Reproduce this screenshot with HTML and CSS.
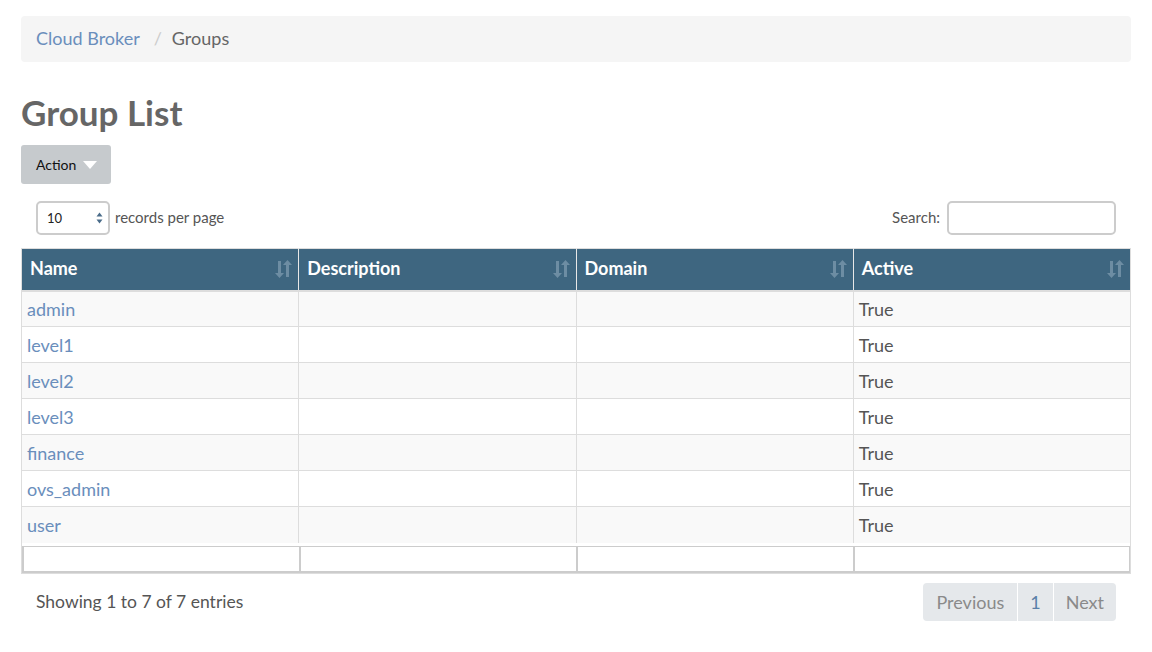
FILE: index.html
```html
<!DOCTYPE html>
<html>
<head>
<meta charset="utf-8">
<link rel="stylesheet" href="styles.css">
</head>
<body>
<div class="page">
  <nav class="crumbs">
    <a class="crumb-link" href="#">Cloud Broker</a>
    <span class="crumb-sep">/</span>
    <span class="crumb-current">Groups</span>
  </nav>
  <h1 class="title">Group List</h1>
  <button class="action-btn">Action <span class="caret"></span></button>
  <div class="controls">
    <div class="length">
      <div class="select-box">
        <span>10</span>
        <svg class="spinner" width="7" height="12" viewBox="0 0 7 12"><path d="M3.5 0.5 L6.5 4.5 H0.5 Z" fill="#4a6c8a"/><path d="M3.5 11.5 L6.5 7.5 H0.5 Z" fill="#4a6c8a"/></svg>
      </div>
      <span class="length-label">records per page</span>
    </div>
    <div class="search">
      <span class="search-label">Search:</span>
      <div class="search-input"></div>
    </div>
  </div>
  <table class="grid">
    <thead>
      <tr>
        <th><span>Name</span><svg class="sort" width="17" height="18" viewBox="0 0 17 18"><path d="M3 1h3v12h3l-4.5 5L0 13h3z" fill="#6d8da3"/><path d="M11 17V5H8l4.5-5L17 5h-3v12z" fill="#6d8da3"/></svg></th>
        <th><span>Description</span><svg class="sort" width="17" height="18" viewBox="0 0 17 18"><path d="M3 1h3v12h3l-4.5 5L0 13h3z" fill="#6d8da3"/><path d="M11 17V5H8l4.5-5L17 5h-3v12z" fill="#6d8da3"/></svg></th>
        <th><span>Domain</span><svg class="sort" width="17" height="18" viewBox="0 0 17 18"><path d="M3 1h3v12h3l-4.5 5L0 13h3z" fill="#6d8da3"/><path d="M11 17V5H8l4.5-5L17 5h-3v12z" fill="#6d8da3"/></svg></th>
        <th><span>Active</span><svg class="sort" width="17" height="18" viewBox="0 0 17 18"><path d="M3 1h3v12h3l-4.5 5L0 13h3z" fill="#6d8da3"/><path d="M11 17V5H8l4.5-5L17 5h-3v12z" fill="#6d8da3"/></svg></th>
      </tr>
    </thead>
    <tbody>
      <tr><td><a href="#">admin</a></td><td></td><td></td><td>True</td></tr>
      <tr><td><a href="#">level1</a></td><td></td><td></td><td>True</td></tr>
      <tr><td><a href="#">level2</a></td><td></td><td></td><td>True</td></tr>
      <tr><td><a href="#">level3</a></td><td></td><td></td><td>True</td></tr>
      <tr><td><a href="#">finance</a></td><td></td><td></td><td>True</td></tr>
      <tr><td><a href="#">ovs_admin</a></td><td></td><td></td><td>True</td></tr>
      <tr><td><a href="#">user</a></td><td></td><td></td><td>True</td></tr>
    </tbody>
    <tfoot>
      <tr>
        <td><div class="filter-cell"></div></td>
        <td><div class="filter-cell"></div></td>
        <td><div class="filter-cell"></div></td>
        <td><div class="filter-cell filter-last"></div></td>
      </tr>
    </tfoot>
  </table>
  <div class="footer">
    <div class="info">Showing 1 to 7 of 7 entries</div>
    <div class="pager">
      <span class="pg pg-off">Previous</span>
      <span class="pg pg-num">1</span>
      <span class="pg pg-off pg-next">Next</span>
    </div>
  </div>
</div>
</body>
</html>
```
FILE: styles.css
```css
* { box-sizing: border-box; }
html, body { margin: 0; padding: 0; background: #fff; }
body { font-family: Lato, "Open Sans", "Liberation Sans", sans-serif; color: #555; }
.page { padding: 16px 21px 0 21px; }

.crumbs {
  background: #f5f5f5;
  border-radius: 4px;
  height: 46px;
  display: flex;
  align-items: center;
  padding: 0 15px 3px 15px;
  font-size: 18px;
}
.crumb-link { color: #6a8ebc; text-decoration: none; }
.crumb-sep { color: #ccc; margin: 0 10px 0 14px; }
.crumb-current { color: #666; }

.title {
  margin: 30px 0 0 0;
  font-size: 35px;
  font-weight: 700;
  color: #666;
  line-height: 40px;
  height: 40px;
}
.action-btn {
  margin-top: 13px;
  width: 90px;
  height: 39px;
  background: #c6cacd;
  border: none;
  border-radius: 3px;
  font-family: Lato, "Liberation Sans", sans-serif;
  font-size: 14px;
  color: #111;
  display: flex;
  align-items: center;
  padding: 0 0 0 15px;
}
.caret {
  display: inline-block;
  margin-left: 7px;
  width: 0; height: 0;
  border-left: 7px solid transparent;
  border-right: 7px solid transparent;
  border-top: 8px solid #fff;
}

.controls {
  margin-top: 17px;
  display: flex;
  justify-content: space-between;
  align-items: center;
  padding: 0 15px;
  height: 34px;
}
.length { display: flex; align-items: center; }
.select-box {
  width: 74px; height: 34px;
  border: 2px solid #ccc;
  border-radius: 5px;
  display: flex; align-items: center; justify-content: space-between;
  padding: 0 5px 0 9px;
  font-size: 13px; color: #222;
}
.length-label { margin-left: 5px; font-size: 15px; color: #555; margin-top: -3px; }
.search { display: flex; align-items: center; }
.search-label { font-size: 15px; color: #555; margin-right: 7px; margin-top: -3px; }
.search-input {
  width: 169px; height: 34px;
  border: 2px solid #ccc;
  border-radius: 5px;
}

.grid {
  margin-top: 13px;
  width: 100%;
  border-collapse: collapse;
  table-layout: fixed;
  font-size: 18px;
  border: 1px solid #ddd;
}
.grid th {
  background: #3e6680;
  color: #fff;
  font-weight: 700;
  text-align: left;
  height: 42px;
  padding: 0 8px;
  border-left: 1px solid #e8e8e8;
  border-bottom: 2px solid #ddd;
  position: relative;
  font-size: 18px;
}
.grid th:first-child { border-left: none; }
.grid th span { position: relative; top: -1px; }
.sort { position: absolute; right: 6px; top: 11px; }
.grid td {
  height: 36px;
  padding: 0 5px;
  border-left: 1px solid #ddd;
  border-top: 1px solid #ddd;
  color: #555;
}
.grid tbody tr:nth-child(odd) td { background: #f9f9f9; }
.grid tbody tr:first-child td { border-top: none; }
.grid td a { color: #6a8ebc; text-decoration: none; }
.grid tfoot td {
  height: auto;
  background: #fff;
  border: none;
  padding: 3px 0 0 0;
}
.filter-cell {
  height: 27px;
  border-top: 1px solid #ccc;
  border-bottom: 2px solid #ccc;
  border-left: 2px solid #ccc;
}
.filter-last { border-right: 1px solid #ccc; }

.footer {
  display: flex;
  justify-content: space-between;
  align-items: center;
  margin-top: 9px;
  padding: 0 15px;
}
.info { font-size: 17.5px; color: #555; }
.pager {
  display: flex;
  background: #e5e8eb;
  border-radius: 4px;
  height: 38px;
  overflow: hidden;
}
.pg {
  display: flex; align-items: center;
  font-size: 18px;
  padding: 0 13px;
  border-left: 1px solid #fff;
}
.pg:first-child { border-left: none; }
.pg-off { color: #8a8a8a; }
.pg-num { color: #5a7fa8; padding: 0 12px; }
.pg-next { padding: 0 12px 0 12px; }
```
